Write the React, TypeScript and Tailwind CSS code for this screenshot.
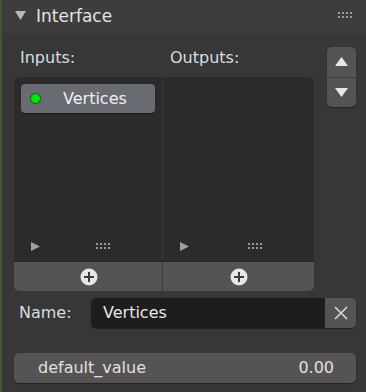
import React from 'react'

function Dots() {
  return (
    <svg width="16" height="7" viewBox="0 0 16 7">
      {[0, 4, 8, 12].map((x) => (
        <g key={x}>
          <rect x={x} y={0} width="2" height="2" fill="#9a9a9a" />
          <rect x={x} y={4} width="2" height="2" fill="#9a9a9a" />
        </g>
      ))}
    </svg>
  )
}

function PlusCircle() {
  return (
    <svg width="18" height="18" viewBox="0 0 18 18">
      <circle cx="9" cy="9" r="8.5" fill="#e6e6e6" />
      <path d="M9 4v10M4 9h10" stroke="#3a3a3a" strokeWidth="2" />
    </svg>
  )
}

function Column({ children }: { children?: React.ReactNode }) {
  return (
    <div className="flex flex-col flex-1">
      <div className="flex-1 px-[7px] pt-[7px]">{children}</div>
      <div className="h-[30px] flex items-center pl-[17px] pr-[50px] justify-between">
        <svg width="9" height="9" viewBox="0 0 9 9"><path d="M0 0L9 4.5L0 9Z" fill="#a0a0a0" /></svg>
        <Dots />
      </div>
    </div>
  )
}

export default function App() {
  return (
    <div className="w-[366px] h-[392px] flex bg-[#373737] text-[#dcdcdc] overflow-hidden" style={{ fontFamily: '"DejaVu Sans", sans-serif' }}>
      <div className="w-[2px] bg-[#3c5a2b] flex-shrink-0" />
      <div className="flex-1 flex flex-col">
        {/* Header */}
        <div className="h-[33px] bg-[#3d3d3d] flex items-center pl-[13px] pr-[12px]">
          <svg width="11" height="9" viewBox="0 0 11 9" className="mr-[10px] mt-[-2px]"><path d="M0 0H11L5.5 9Z" fill="#b8b8b8" /></svg>
          <span className="text-[17px] text-[#e4e4e4]">Interface</span>
          <div className="ml-auto mt-[-3px]"><Dots /></div>
        </div>

        {/* Inputs / Outputs */}
        <div className="flex pl-[12px] pr-[10px] pt-[13px]">
          <div className="w-[300px] flex flex-col">
            <div className="flex text-[16px] h-[23px] leading-[23px]">
              <span className="w-[150px] pl-[6px]">Inputs:</span>
              <span className="pl-[6px]">Outputs:</span>
            </div>
            <div className="mt-[8px] h-[214px] rounded-[5px] overflow-hidden flex flex-col bg-[#2b2b2b]">
              <div className="flex flex-1">
                <div className="w-[149px] border-r border-[#3a3a3a] flex">
                  <Column>
                    <div className="h-[29px] rounded-[4px] bg-[#686b72] flex items-center pl-[9px] shadow-[0_1px_1px_rgba(0,0,0,0.4)]">
                      <span className="w-[11px] h-[11px] rounded-full bg-[#00e600] border border-[#0a5a0a]" />
                      <span className="ml-[22px] text-[16px] text-[#f0f0f0]">Vertices</span>
                    </div>
                  </Column>
                </div>
                <div className="flex-1 flex">
                  <Column />
                </div>
              </div>
              <div className="h-[30px] flex bg-[#545454] border-t border-[#262626]">
                <div className="w-[149px] border-r border-[#3a3a3a] flex items-center justify-center pl-[1px]"><PlusCircle /></div>
                <div className="flex-1 flex items-center justify-center"><PlusCircle /></div>
              </div>
            </div>
          </div>
          <div className="ml-auto mt-[1px] w-[29px] h-[60px] rounded-[5px] bg-[#545454] flex flex-col shadow-[0_1px_1px_rgba(0,0,0,0.4)]">
            <div className="flex-1 flex items-center justify-center border-b border-[#3a3a3a]">
              <svg width="13" height="9" viewBox="0 0 13 9"><path d="M0 9L6.5 0L13 9Z" fill="#e8e8e8" /></svg>
            </div>
            <div className="flex-1 flex items-center justify-center">
              <svg width="13" height="9" viewBox="0 0 13 9"><path d="M0 0H13L6.5 9Z" fill="#e8e8e8" /></svg>
            </div>
          </div>
        </div>

        {/* Name */}
        <div className="flex items-center mt-[7px] pl-[17px] pr-[10px]">
          <span className="w-[72px] text-[16px]">Name:</span>
          <div className="flex-1 h-[30px] flex rounded-[5px] overflow-hidden shadow-[0_1px_1px_rgba(0,0,0,0.4)]">
            <div className="flex-1 bg-[#1d1d1d] flex items-center pl-[12px] text-[16px] text-[#e6e6e6]">Vertices</div>
            <div className="w-[31px] bg-[#545454] flex items-center justify-center">
              <svg width="14" height="14" viewBox="0 0 14 14"><path d="M1 1L13 13M13 1L1 13" stroke="#d8d8d8" strokeWidth="1.6" /></svg>
            </div>
          </div>
        </div>

        {/* default_value */}
        <div className="mt-[25px] ml-[12px] mr-[10px] h-[30px] rounded-[5px] bg-[#545454] flex items-center pl-[24px] pr-[22px] text-[16px] text-[#e0e0e0] shadow-[0_1px_1px_rgba(0,0,0,0.4)]">
          <span>default_value</span>
          <span className="ml-auto">0.00</span>
        </div>
      </div>
    </div>
  )
}
